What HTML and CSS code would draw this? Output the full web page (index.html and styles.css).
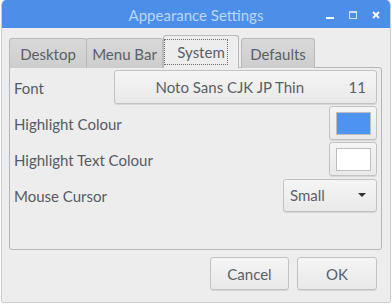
FILE: index.html
```html
<!DOCTYPE html>
<html>
<head>
<meta charset="utf-8">
<link rel="stylesheet" href="styles.css">
</head>
<body>
<div class="window">
  <div class="titlebar">
    <span class="title">Appearance Settings</span>
    <div class="controls">
      <span class="ctl ctl-min"></span>
      <span class="ctl ctl-max"></span>
      <svg class="ctl-close" width="8" height="8" viewBox="0 0 8 8"><path d="M1 1 L7 7 M7 1 L1 7" stroke="#ffffff" stroke-width="1.8" fill="none"/></svg>
    </div>
  </div>
  <div class="main">
    <div class="tabs">
      <div class="tab tab-desktop">Desktop</div>
      <div class="tab tab-menubar">Menu Bar</div>
      <div class="tab tab-active"><span class="focus">System</span></div>
      <div class="tab tab-defaults">Defaults</div>
    </div>
    <div class="panel">
      <div class="grid">
        <div class="label">Font</div>
        <div class="btn font-btn"><span class="font-name">Noto Sans CJK JP Thin</span><span class="font-size">11</span></div>
        <div class="label">Highlight Colour</div>
        <div class="btn swatch-btn"><span class="swatch swatch-blue"></span></div>
        <div class="label">Highlight Text Colour</div>
        <div class="btn swatch-btn"><span class="swatch swatch-white"></span></div>
        <div class="label">Mouse Cursor</div>
        <div class="btn combo"><span>Small</span><span class="arrow"></span></div>
      </div>
    </div>
    <div class="footer">
      <div class="btn action cancel">Cancel</div>
      <div class="btn action ok">OK</div>
    </div>
  </div>
</div>
</body>
</html>
```

FILE: styles.css
```css
* { box-sizing: border-box; }
html, body { margin: 0; padding: 0; background: #ffffff; }
body {
  font-family: Lato, "Noto Sans", "DejaVu Sans", sans-serif;
  font-size: 15px;
  color: #555a60;
}
.window {
  margin-left: 1px;
  width: 390px;
  height: 303px;
  border: 1px solid #cdcdcd;
  border-top: none;
  border-radius: 5px 5px 2px 2px;
  background: #ededed;
  display: flex;
  flex-direction: column;
  overflow: hidden;
}
.titlebar {
  height: 28px;
  flex: none;
  background: #4b8fe9;
  display: flex;
  align-items: center;
  justify-content: center;
  position: relative;
  margin: 0 -1px;
}
.title {
  color: #bdd6f8;
  font-size: 15px;
  padding-top: 2px;
}
.controls {
  position: absolute;
  right: 11px;
  top: 0;
  height: 28px;
  display: flex;
  align-items: center;
  gap: 15px;
}
.ctl-min {
  width: 8px;
  height: 2px;
  background: #ffffff;
  margin-top: 8px;
}
.ctl-max {
  width: 8px;
  height: 8px;
  border: 1.5px solid #cfe0f7;
  border-top-width: 2px;
  margin-top: 1px;
}
.ctl-close { display: block; margin-top: 1px; }
.main {
  flex: 1;
  display: flex;
  flex-direction: column;
  padding: 7px 8px 12px 7px;
}
.tabs {
  height: 33px;
  display: flex;
  align-items: flex-end;
  margin-bottom: -1px;
  position: relative;
  z-index: 1;
}
.tab {
  height: 30px;
  border: 1px solid #b9b9b9;
  border-bottom: none;
  border-radius: 3px 3px 0 0;
  background: linear-gradient(#d9d9d9, #cdcdcd);
  display: flex;
  align-items: center;
  justify-content: center;
  color: #5a5f66;
  padding-top: 1px;
  white-space: nowrap;
}
.tab-desktop { width: 78px; }
.tab-menubar { width: 77px; margin-left: -1px; }
.tab-active {
  width: 76px;
  height: 33px;
  background: #ededed;
  margin-left: 0;
  padding-top: 0;
}
.focus {
  width: 64px;
  height: 26px;
  border: 1px dotted #707070;
  display: flex;
  align-items: center;
  justify-content: center;
  margin-left: -10px;
  padding-left: 10px;
}
.tab-defaults { width: 74px; margin-left: 2px; }
.panel {
  flex: 1;
  border: 1px solid #b6b6b6;
  border-radius: 0 3px 3px 3px;
  padding: 2px 4px 0 4px;
}
.grid {
  display: grid;
  grid-template-columns: 100px 1fr;
  grid-auto-rows: 34px;
  row-gap: 2px;
  align-items: center;
}
.label {
  color: #555b63;
  padding-top: 1px;
  white-space: nowrap;
}
.btn {
  border: 1px solid #c2c2c2;
  border-radius: 3px;
  background: linear-gradient(#f5f5f5, #e9e9e9);
  box-shadow: 0 1px 0 #d6d6d6;
  height: 34px;
  display: flex;
  align-items: center;
  color: #5a5f66;
  white-space: nowrap;
}
.font-btn {
  padding: 0 10px 0 0;
}
.font-name { flex: 1; text-align: center; margin-right: 4px; }
.swatch-btn {
  justify-self: end;
  width: 48px;
  justify-content: center;
}
.swatch {
  width: 35px;
  height: 23px;
  border: 1px solid #bdbdbd;
}
.swatch-blue { background: #4d94f0; }
.swatch-white { background: #ffffff; }
.combo {
  justify-self: end;
  width: 94px;
  height: 33px;
  padding: 0 10px 0 6px;
  justify-content: space-between;
}
.arrow {
  width: 0;
  height: 0;
  border-left: 4.5px solid transparent;
  border-right: 4.5px solid transparent;
  border-top: 4.5px solid #303030;
}
.footer {
  display: flex;
  justify-content: flex-end;
  gap: 8px;
  margin-top: 7px;
  padding-right: 5px;
}
.action {
  height: 33px;
  justify-content: center;
}
.cancel { width: 79px; }
.ok { width: 80px; }
```
